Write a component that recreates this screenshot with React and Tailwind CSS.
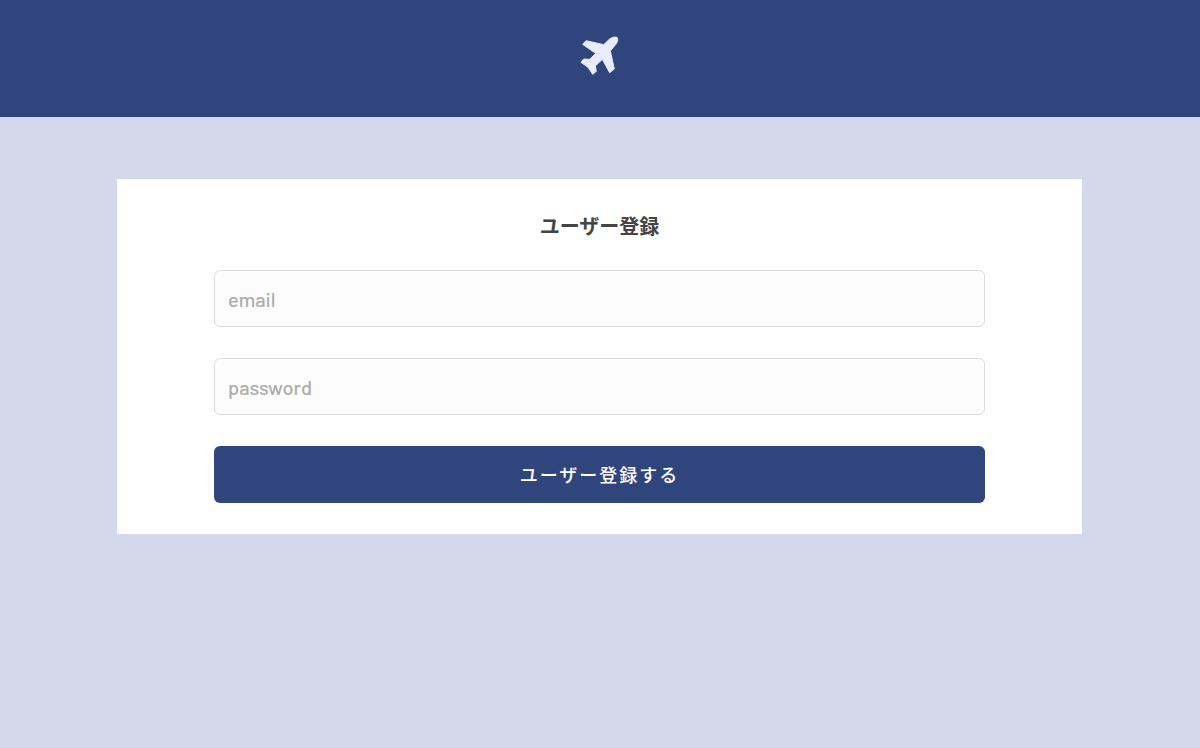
function PlaneIcon() {
  return (
    <svg
      className="h-[60px] w-[60px] text-[#e8ecfb]"
      viewBox="0 0 180 180"
      fill="currentColor"
      stroke="currentColor"
      strokeWidth="3"
      strokeLinejoin="round"
      aria-hidden="true"
    >
      <path d="M101 59 L120 41 Q133 33 141 37 Q147 44 139 56 L121 78 L133 132 L119 143 L97 103 L76 123 L79 139 L68 148 L54 127 L33 112 L41 102 L59 103 L77 85 L38 58 L48 47 Z" />
    </svg>
  )
}

function Field({ type, placeholder }) {
  return (
    <input
      className="h-[57px] w-full rounded-md border border-[#dcdcdc] bg-[#fcfcfc] px-[13px] pt-px text-[20px] font-medium text-[#444444] outline-none placeholder:text-[#adadad]"
      type={type}
      placeholder={placeholder}
      aria-label={placeholder}
    />
  )
}

export default function App() {
  return (
    <div className="min-h-screen bg-[#d3d8eb] font-['Barlow','Roboto','Noto_Sans_CJK_JP',sans-serif]">
      <header className="flex h-[117px] justify-center bg-[#2f457c] pt-[25px]">
        <PlaneIcon />
      </header>

      <main className="pt-[62px]">
        <form
          className="ml-[117px] flex h-[355px] w-[965px] flex-col items-center bg-white px-[97px]"
          onSubmit={(event) => event.preventDefault()}
        >
          <h1 className="mt-8 h-[30px] text-[20px] leading-[30px] font-bold text-[#444444]">ユーザー登録</h1>
          <div className="mt-[29px] flex w-full flex-col gap-[31px]">
            <Field type="email" placeholder="email" />
            <Field type="password" placeholder="password" />
            <button
              type="submit"
              className="h-[57px] w-full rounded-md bg-[#2f457c] pt-px text-[18px] font-medium tracking-[2px] text-white"
            >
              ユーザー登録する
            </button>
          </div>
        </form>
      </main>
    </div>
  )
}
